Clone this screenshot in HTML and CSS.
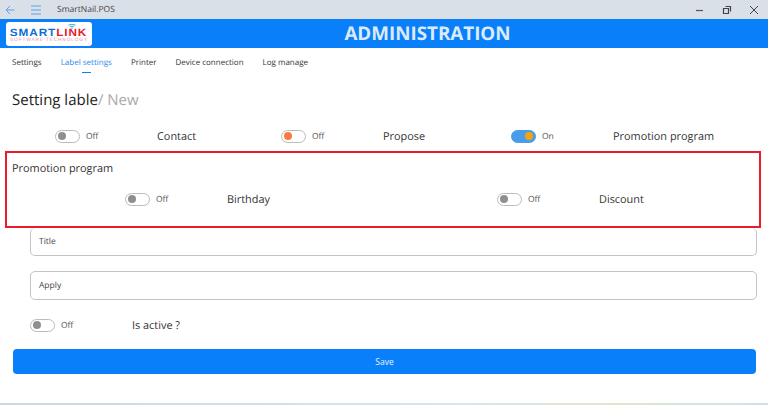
FILE: index.html
```html
<!DOCTYPE html>
<html lang="en">
<head>
<meta charset="utf-8">
<title>SmartNail.POS</title>
<link rel="stylesheet" href="styles.css">
</head>
<body>
<div class="titlebar">
  <svg class="back" width="10" height="10" viewBox="0 0 10 10"><path d="M9.500 5H1M5 1L1 5l4 4" fill="none" stroke="#5a9fe8" stroke-width="1"/></svg>
  <svg class="menu" width="12" height="10" viewBox="0 0 12 10"><path d="M1 1h10M1 5h10M1 9h10" fill="none" stroke="#5a9fe8" stroke-width="1"/></svg>
  <span class="apptitle">SmartNail.POS</span>
  <div class="winbtns">
    <svg width="10" height="10" viewBox="0 0 10 10"><path d="M1 5.500h7" stroke="#555" stroke-width="1.200"/></svg>
    <svg width="10" height="10" viewBox="0 0 10 10"><path d="M3.500 1.500h5v5M1.500 3.500h5v5h-5z" fill="none" stroke="#444" stroke-width="1.200"/></svg>
    <svg width="10" height="10" viewBox="0 0 10 10"><path d="M1 1l8 8M9 1L1 9" stroke="#444" stroke-width="1"/></svg>
  </div>
</div>
<header class="header">
  <div class="logo">
    <svg class="wifi" width="8" height="5" viewBox="0 0 8 5"><path d="M0.500 1.200Q4-1 7.500 1.200M2 2.800Q4 1.500 6 2.800" fill="none" stroke="#3ba3e8" stroke-width="1"/><circle cx="4" cy="4.200" r=".7" fill="#3ba3e8"/></svg>
    <div class="logoname"><span class="lblue">SMART</span><span class="lred">LINK</span></div>
    <div class="logosub">SOFTWARE TECHNOLOGY</div>
  </div>
  <h1 class="pagetitle">ADMINISTRATION</h1>
</header>
<nav class="tabs">
  <span class="tab">Settings</span>
  <span class="tab active">Label settings</span>
  <span class="tab">Printer</span>
  <span class="tab">Device connection</span>
  <span class="tab">Log manage</span>
</nav>
<main class="content">
  <h2 class="heading">Setting lable<span class="muted">/ New</span></h2>
  <div class="row-top">
    <div class="opt">
      <div class="switch-group"><span class="switch"><i class="knob"></i></span><span class="state">Off</span></div>
      <span class="optlabel">Contact</span>
    </div>
    <div class="opt">
      <div class="switch-group"><span class="switch"><i class="knob orange"></i></span><span class="state">Off</span></div>
      <span class="optlabel">Propose</span>
    </div>
    <div class="opt">
      <div class="switch-group"><span class="switch on"><i class="knob amber"></i></span><span class="state">On</span></div>
      <span class="optlabel">Promotion program</span>
    </div>
  </div>
  <section class="promo">
    <div class="promotitle">Promotion program</div>
    <div class="row-promo">
      <div class="opt">
        <div class="switch-group"><span class="switch"><i class="knob"></i></span><span class="state">Off</span></div>
        <span class="optlabel">Birthday</span>
      </div>
      <div class="opt">
        <div class="switch-group"><span class="switch"><i class="knob"></i></span><span class="state">Off</span></div>
        <span class="optlabel">Discount</span>
      </div>
    </div>
  </section>
  <div class="field first">Title</div>
  <div class="field">Apply</div>
  <div class="row-active">
    <div class="opt">
      <div class="switch-group"><span class="switch"><i class="knob"></i></span><span class="state">Off</span></div>
      <span class="optlabel">Is active ?</span>
    </div>
  </div>
  <button class="save">Save</button>
</main>
<div class="taskstrip"></div>
</body>
</html>
```
FILE: styles.css
```css
* { box-sizing: border-box; }
html, body { margin: 0; padding: 0; }
body {
  width: 768px;
  height: 405px;
  overflow: hidden;
  background: #fff;
  font-family: "Open Sans", "Noto Sans", sans-serif;
  text-rendering: geometricPrecision;
  color: #333;
  display: flex;
  flex-direction: column;
}
.titlebar {
  height: 19px;
  flex: none;
  display: flex;
  align-items: center;
  background: #dae0e8;
  padding-left: 5px;
}
.back { margin-right: 15px; }
.menu { margin-right: 15px; }
.apptitle { font-size: 8.500px; color: #444; }
.winbtns { margin-left: auto; display: flex; gap: 17px; padding-right: 9px; }
.header {
  height: 29px;
  flex: none;
  background: #0a7ffa;
  display: flex;
  align-items: center;
  justify-content: center;
  padding-left: 87px;
}
.logo {
  position: absolute;
  left: 6px;
  top: 22px;
  width: 86px;
  height: 24px;
  background: #fff;
  border-radius: 3px;
  display: flex;
  flex-direction: column;
  align-items: center;
  padding-top: 6px;
}
.wifi { position: absolute; left: 62px; top: 2px; }
.logoname {
  font-family: "Liberation Sans", sans-serif;
  font-weight: 700;
  font-size: 10.500px;
  line-height: 10px;
  letter-spacing: .8px;
  transform: scaleX(1.120);
}
.lblue { color: #0b6fd8; }
.lred { color: #e8202c; }
.logosub {
  font-family: "Liberation Sans", sans-serif;
  font-size: 4.800px;
  line-height: 6px;
  letter-spacing: .85px;
  color: #e09aa5;
}
.pagetitle {
  margin: 0;
  font-size: 18.800px;
  font-weight: 700;
  color: #dcebfb;
  line-height: 29px;
}
.tabs {
  height: 27px;
  flex: none;
  display: flex;
  align-items: center;
  padding: 2px 0 0 12px;
  gap: 19px;
  font-size: 8px;
  color: #333;
}
.tab { position: relative; line-height: 12px; }
.active { color: #2b8ae6; }
.active::after {
  content: "";
  position: absolute;
  left: 21px;
  width: 9px;
  top: 15px;
  height: 1.500px;
  background: #0a7ffa;
}
.content { flex: 1; display: flex; flex-direction: column; }
.heading {
  margin: 15px 0 0 12px;
  font-size: 15px;
  font-weight: 400;
  line-height: 20px;
  color: #222;
}
.muted { color: #aaa; }
.row-top {
  display: grid;
  grid-template-columns: 226px 230px auto;
  padding-left: 55px;
  margin-top: 16px;
  height: 20px;
}
.opt { display: flex; align-items: center; }
.switch-group { width: 102px; flex: none; display: flex; align-items: center; gap: 6px; }
.switch {
  width: 25px;
  height: 13px;
  border-radius: 7px;
  border: 1px solid #bbb;
  background: #fff;
  padding-left: 2px;
  display: flex;
  align-items: center;
}
.switch.on { background: #4a9bea; border-color: #4a9bea; justify-content: flex-end; padding: 0 2px 0 0; }
.knob { width: 8px; height: 8px; border-radius: 50%; background: #8f8f8f; }
.knob.orange { background: #f87a40; }
.knob.amber { background: #f5a30f; }
.state { font-size: 8.500px; color: #555; }
.optlabel { font-size: 10.900px; color: #333; }
.promo {
  margin: 5px 7px 0 5px;
  height: 77px;
  border: 2px solid #ea1c2c;
  padding: 8px 0 0 5px;
}
.promotitle { font-size: 10.900px; line-height: 15px; color: #333; }
.row-promo {
  display: grid;
  grid-template-columns: 372px auto;
  padding-left: 113px;
  margin-top: 13px;
  height: 20px;
}
.field {
  margin: 0 11px 0 30px;
  height: 29px;
  border: 1px solid #c4c4c4;
  border-radius: 5px;
  font-size: 8.500px;
  color: #444;
  padding-left: 8px;
  display: flex;
  align-items: center;
}
.field.first { border-top: none; height: 28px; margin-bottom: 15px; }
.row-active { padding-left: 30px; margin-top: 15px; height: 20px; display: flex; }
.save {
  margin: 14px 12px 0 13px;
  height: 25px;
  border: none;
  border-radius: 4px;
  background: #0a7ffa;
  color: #e8f2fd;
  font-family: inherit;
  font-size: 8.500px;
}
.taskstrip {
  height: 2px;
  flex: none;
  background: linear-gradient(90deg, #c8d8ea, #d8e4f0 60%, #dde8c8 80%, #cfe0ee);
}
```
